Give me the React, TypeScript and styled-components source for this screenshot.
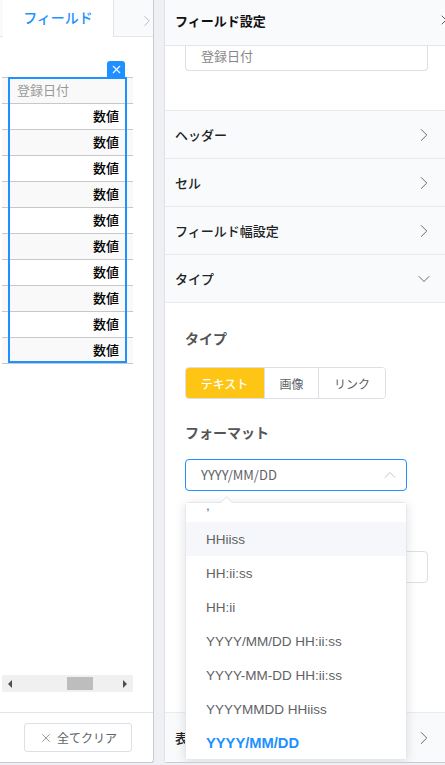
import styled, { createGlobalStyle } from "styled-components";
import { ChevronDown, ChevronRight, ChevronUp, X } from "lucide-react";

const GlobalStyle = createGlobalStyle`
  html, body {
    margin: 0;
    padding: 0;
    width: 445px;
    height: 765px;
    overflow: hidden;
    background: #eff0f4;
    font-family: "Noto Sans CJK JP", "Noto Sans", sans-serif;
  }
  * {
    box-sizing: border-box;
  }
`;

const Page = styled.div`
  display: flex;
  gap: 10px;
  width: 445px;
  height: 763px;
`;

const LeftPanel = styled.section`
  flex: 0 0 154px;
  display: flex;
  flex-direction: column;
  background: #fff;
  border-right: 1px solid #c9cbd0;
  border-bottom: 1px solid #c9cbd0;
  border-bottom-right-radius: 3px;
`;

const Tabs = styled.div`
  display: flex;
  height: 37px;
`;

const TabStub = styled.div`
  width: 3px;
  background: #f9fafc;
  border-bottom: 1px solid #e4e6ec;
`;

const ActiveTab = styled.div`
  width: 111px;
  display: flex;
  align-items: center;
  justify-content: center;
  padding-bottom: 4px;
  color: #1e90ff;
  font-size: 14px;
  font-weight: 500;
  border-right: 1px solid #e4e6ec;
`;

const NextTab = styled.div`
  flex: 1;
  display: flex;
  align-items: center;
  justify-content: flex-end;
  padding: 5px 0 0 0;
  color: #b0b3ba;
  background: #f9fafc;
  border-bottom: 1px solid #e4e6ec;
`;

const TabChevron = styled.span`
  display: flex;
  margin-right: -3px;
`;

const Canvas = styled.div`
  flex: 1;
  padding: 40px 20px 0 2px;
`;

const TableWrap = styled.div`
  position: relative;
`;

const Row = styled.div<{ $shaded?: boolean; $head?: boolean }>`
  height: 26px;
  padding: 0 14px 2px 15px;
  display: flex;
  align-items: center;
  justify-content: ${({ $head }) => ($head ? "flex-start" : "flex-end")};
  border-bottom: 1px solid #c8c8c8;
  background: ${({ $shaded, $head }) => ($head || $shaded ? "#f9f9f9" : "#fff")};
  color: ${({ $head }) => ($head ? "#999" : "#000")};
  font-size: 13px;
  font-weight: ${({ $head }) => ($head ? 400 : 500)};
`;

const TopRule = styled.div`
  height: 1px;
  background: #c8c8c8;
`;

const Selection = styled.div`
  position: absolute;
  left: 6px;
  top: 0;
  width: 119px;
  height: 286px;
  border: 2px solid #1e90ff;
  pointer-events: none;
`;

const RemoveTab = styled.div`
  position: absolute;
  left: 105px;
  top: -16px;
  width: 18px;
  height: 17px;
  display: flex;
  align-items: center;
  justify-content: center;
  color: #fff;
  background: #1e90ff;
  border-radius: 3px 3px 0 0;
`;

const ScrollBar = styled.div`
  height: 17px;
  margin: 0 20px 20px 2px;
  display: flex;
  align-items: center;
  justify-content: space-between;
  padding: 0 6px;
  background: #f0f0f0;
  position: relative;
`;

const Arrow = styled.span<{ $dir: "left" | "right" }>`
  width: 0;
  height: 0;
  border-top: 4px solid transparent;
  border-bottom: 4px solid transparent;
  ${({ $dir }) =>
    $dir === "left" ? "border-right: 4px solid #505050;" : "border-left: 4px solid #505050;"}
`;

const Thumb = styled.span`
  position: absolute;
  left: 65px;
  top: 2px;
  width: 26px;
  height: 13px;
  background: #bdbdbd;
`;

const LeftFooter = styled.footer`
  height: 50px;
  padding: 10px 21px 0 24px;
  border-top: 1px solid #e2e4ea;
`;

const ClearButton = styled.button`
  width: 108px;
  height: 29px;
  display: flex;
  align-items: center;
  justify-content: center;
  gap: 4px;
  padding: 0;
  background: #fff;
  border: 1px solid #dcdfe6;
  border-radius: 3px;
  color: #606266;
  font-family: inherit;
  font-size: 12px;
`;

const RightPanel = styled.section`
  flex: 0 0 290px;
  position: relative;
  display: flex;
  flex-direction: column;
  background: #fff;
  border-left: 1px solid #dfe1e6;
  border-bottom: 1px solid #c9cbd0;
  border-radius: 0 0 0 3px;
`;

const PanelHeader = styled.header`
  flex: 0 0 46px;
  display: flex;
  align-items: center;
  justify-content: space-between;
  padding: 0 0 5px 10px;
  background: #f9fafc;
  border-bottom: 1px solid #e4e6ec;
  color: #111;
  font-size: 13px;
  font-weight: 700;
  position: relative;
  z-index: 1;
`;

const HeaderChevron = styled.span`
  display: flex;
  color: #555;
  margin-right: 2px;
`;

const Body = styled.div`
  flex: 1;
  display: flex;
  flex-direction: column;
  overflow: hidden;
`;

const NameBlock = styled.div`
  height: 65px;
  padding: 0 26px 0 20px;
  margin-top: -1px;
`;

const TextField = styled.div`
  height: 26px;
  display: flex;
  align-items: flex-end;
  padding: 0 15px 5px;
  border: 1px solid #dcdfe6;
  border-top: 0;
  border-radius: 0 0 4px 4px;
  width: 243px;
  color: #888;
  font-size: 13px;
`;

const Section = styled.div`
  height: 48px;
  flex: 0 0 48px;
  display: flex;
  align-items: center;
  justify-content: space-between;
  padding: 0 19px 0 10px;
  background: #f9fafc;
  border-top: 1px solid #e8eaf0;
  color: #222;
  font-size: 13px;
  font-weight: 500;
`;

const RowChevron = styled.span<{ $open?: boolean }>`
  display: flex;
  color: #555c68;
  margin-right: ${({ $open }) => ($open ? "1px" : "0")};
`;

const Form = styled.div`
  flex: 1;
  display: flex;
  flex-direction: column;
  position: relative;
  padding: 25px 20px 0;
  border-top: 1px solid #e8eaf0;
`;

const FieldLabel = styled.div`
  height: 20px;
  line-height: 20px;
  color: #555;
  font-size: 14px;
  font-weight: 700;
`;

const ButtonGroup = styled.div`
  display: flex;
  width: 201px;
  height: 32px;
  margin: 19px 0 23px;
  border: 1px solid #dcdfe6;
  border-radius: 4px;
  overflow: hidden;
`;

const GroupButton = styled.div<{ $active?: boolean; $width: number }>`
  flex: 0 0 ${({ $width }) => $width}px;
  display: flex;
  align-items: center;
  justify-content: center;
  color: ${({ $active }) => ($active ? "#fff" : "#606266")};
  background: ${({ $active }) => ($active ? "#fec514" : "#fff")};
  font-size: 12px;
  font-weight: ${({ $active }) => ($active ? 500 : 400)};
  & + & {
    border-left: 1px solid #dcdfe6;
  }
  &:first-child {
    margin: -1px 0 -1px -1px;
  }
`;

const SelectBox = styled.div`
  width: 222px;
  height: 32px;
  margin-top: 17px;
  display: flex;
  align-items: center;
  justify-content: space-between;
  padding: 0 6px 2px 15px;
  border: 1px solid #1e90ff;
  border-radius: 4px;
  color: #606266;
  font-size: 13px;
`;

const SelectChevron = styled.span`
  display: flex;
  color: #c0c4cc;
  margin-bottom: -2px;
`;

const HiddenField = styled.div`
  width: 243px;
  height: 32px;
  margin-top: 60px;
  border: 1px solid #dcdfe6;
  border-radius: 4px;
`;

const Spacer = styled.div`
  flex: 1;
`;

const BottomSection = styled(Section)`
  margin: 0 -20px;
  flex-basis: 50px;
  height: 50px;
`;

const Dropdown = styled.div`
  position: absolute;
  left: 20px;
  top: 199px;
  width: 222px;
  height: 258px;
  background: #fff;
  border: 1px solid #e4e7ed;
  border-radius: 4px;
  box-shadow: 0 2px 12px rgba(0, 0, 0, 0.12);
  z-index: 2;
`;

const Caret = styled.span`
  position: absolute;
  left: 36px;
  top: -5px;
  width: 9px;
  height: 9px;
  background: #fff;
  border-left: 1px solid #e4e7ed;
  border-top: 1px solid #e4e7ed;
  transform: rotate(45deg);
`;

const OptionList = styled.ul`
  height: 100%;
  margin: 0;
  padding: 0;
  list-style: none;
  overflow: hidden;
`;

const Option = styled.li<{ $hover?: boolean; $selected?: boolean; $first?: boolean }>`
  height: 34px;
  line-height: 34px;
  padding: ${({ $selected }) => ($selected ? "0" : "1px")} 20px 0;
  margin-top: ${({ $first }) => ($first ? "-15px" : "0")};
  font-family: "Liberation Sans", Arial, sans-serif;
  font-size: ${({ $selected }) => ($selected ? "14.7px" : "13.5px")};
  font-weight: ${({ $selected }) => ($selected ? 700 : 400)};
  color: ${({ $selected }) => ($selected ? "#1e90ff" : "#606266")};
  background: ${({ $hover }) => ($hover ? "#f5f7fa" : "#fff")};
`;

const rows = Array.from({ length: 10 }, (_, i) => i);
const options = [
  "HHiiss",
  "HH:ii:ss",
  "HH:ii",
  "YYYY/MM/DD HH:ii:ss",
  "YYYY-MM-DD HH:ii:ss",
  "YYYYMMDD HHiiss",
];

export default function App() {
  return (
    <>
      <GlobalStyle />
      <Page>
        <LeftPanel>
          <Tabs>
            <TabStub />
            <ActiveTab>フィールド</ActiveTab>
            <NextTab>
              <TabChevron>
                <ChevronRight size={18} strokeWidth={1.2} />
              </TabChevron>
            </NextTab>
          </Tabs>
          <Canvas>
            <TableWrap>
              <TopRule />
              <Row $head>登録日付</Row>
              {rows.map((i) => (
                <Row key={i} $shaded={i % 2 === 1}>
                  数値
                </Row>
              ))}
              <Selection />
              <RemoveTab>
                <X size={13} strokeWidth={2} />
              </RemoveTab>
            </TableWrap>
          </Canvas>
          <ScrollBar>
            <Arrow $dir="left" />
            <Thumb />
            <Arrow $dir="right" />
          </ScrollBar>
          <LeftFooter>
            <ClearButton>
              <X size={14} strokeWidth={1.1} />
              全てクリア
            </ClearButton>
          </LeftFooter>
        </LeftPanel>
        <RightPanel>
          <PanelHeader>
            フィールド設定
            <HeaderChevron>
              <ChevronRight size={16} strokeWidth={1.4} />
            </HeaderChevron>
          </PanelHeader>
          <Body>
            <NameBlock>
              <TextField>登録日付</TextField>
            </NameBlock>
            <Section>
              ヘッダー
              <RowChevron>
                <ChevronRight size={22} strokeWidth={1} />
              </RowChevron>
            </Section>
            <Section>
              セル
              <RowChevron>
                <ChevronRight size={22} strokeWidth={1} />
              </RowChevron>
            </Section>
            <Section>
              フィールド幅設定
              <RowChevron>
                <ChevronRight size={22} strokeWidth={1} />
              </RowChevron>
            </Section>
            <Section>
              タイプ
              <RowChevron $open>
                <ChevronDown size={20} strokeWidth={1.1} />
              </RowChevron>
            </Section>
            <Form>
              <FieldLabel>タイプ</FieldLabel>
              <ButtonGroup>
                <GroupButton $active $width={79}>
                  テキスト
                </GroupButton>
                <GroupButton $width={54}>画像</GroupButton>
                <GroupButton $width={67}>リンク</GroupButton>
              </ButtonGroup>
              <FieldLabel>フォーマット</FieldLabel>
              <SelectBox>
                YYYY/MM/DD
                <SelectChevron>
                  <ChevronUp size={20} strokeWidth={1.2} />
                </SelectChevron>
              </SelectBox>
              <HiddenField />
              <Spacer />
              <BottomSection>
                表示
                <RowChevron>
                  <ChevronRight size={22} strokeWidth={1} />
                </RowChevron>
              </BottomSection>
              <Dropdown>
                <Caret />
                <OptionList>
                  <Option $first>,</Option>
                  {options.map((o, i) => (
                    <Option key={o} $hover={i === 0}>
                      {o}
                    </Option>
                  ))}
                  <Option $selected>YYYY/MM/DD</Option>
                </OptionList>
              </Dropdown>
            </Form>
          </Body>
        </RightPanel>
      </Page>
    </>
  );
}
